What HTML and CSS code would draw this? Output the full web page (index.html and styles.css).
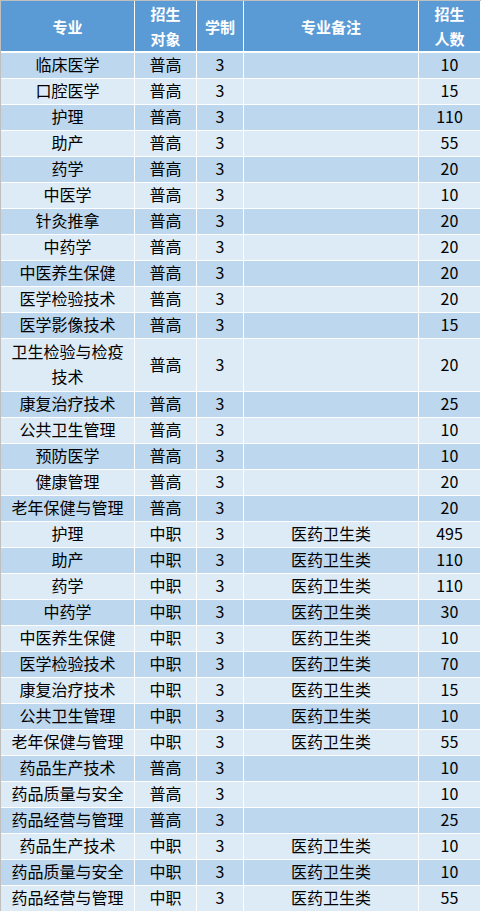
FILE: index.html
```html
<!DOCTYPE html>
<html lang="zh">
<head>
<meta charset="utf-8">
<title>招生计划</title>
<link rel="stylesheet" href="styles.css">
</head>
<body>
<table class="plan">
  <colgroup>
    <col class="c-major">
    <col class="c-target">
    <col class="c-years">
    <col class="c-note">
    <col class="c-count">
  </colgroup>
  <thead>
    <tr>
      <th>专业</th>
      <th>招生<br>对象</th>
      <th>学制</th>
      <th>专业备注</th>
      <th>招生<br>人数</th>
    </tr>
  </thead>
  <tbody>
    <tr><td>临床医学</td><td>普高</td><td>3</td><td></td><td>10</td></tr>
    <tr><td>口腔医学</td><td>普高</td><td>3</td><td></td><td>15</td></tr>
    <tr><td>护理</td><td>普高</td><td>3</td><td></td><td>110</td></tr>
    <tr><td>助产</td><td>普高</td><td>3</td><td></td><td>55</td></tr>
    <tr><td>药学</td><td>普高</td><td>3</td><td></td><td>20</td></tr>
    <tr><td>中医学</td><td>普高</td><td>3</td><td></td><td>10</td></tr>
    <tr><td>针灸推拿</td><td>普高</td><td>3</td><td></td><td>20</td></tr>
    <tr><td>中药学</td><td>普高</td><td>3</td><td></td><td>20</td></tr>
    <tr><td>中医养生保健</td><td>普高</td><td>3</td><td></td><td>20</td></tr>
    <tr><td>医学检验技术</td><td>普高</td><td>3</td><td></td><td>20</td></tr>
    <tr><td>医学影像技术</td><td>普高</td><td>3</td><td></td><td>15</td></tr>
    <tr class="tall"><td>卫生检验与检疫<br>技术</td><td>普高</td><td>3</td><td></td><td>20</td></tr>
    <tr><td>康复治疗技术</td><td>普高</td><td>3</td><td></td><td>25</td></tr>
    <tr><td>公共卫生管理</td><td>普高</td><td>3</td><td></td><td>10</td></tr>
    <tr><td>预防医学</td><td>普高</td><td>3</td><td></td><td>10</td></tr>
    <tr><td>健康管理</td><td>普高</td><td>3</td><td></td><td>20</td></tr>
    <tr><td>老年保健与管理</td><td>普高</td><td>3</td><td></td><td>20</td></tr>
    <tr><td>护理</td><td>中职</td><td>3</td><td>医药卫生类</td><td>495</td></tr>
    <tr><td>助产</td><td>中职</td><td>3</td><td>医药卫生类</td><td>110</td></tr>
    <tr><td>药学</td><td>中职</td><td>3</td><td>医药卫生类</td><td>110</td></tr>
    <tr><td>中药学</td><td>中职</td><td>3</td><td>医药卫生类</td><td>30</td></tr>
    <tr><td>中医养生保健</td><td>中职</td><td>3</td><td>医药卫生类</td><td>10</td></tr>
    <tr><td>医学检验技术</td><td>中职</td><td>3</td><td>医药卫生类</td><td>70</td></tr>
    <tr><td>康复治疗技术</td><td>中职</td><td>3</td><td>医药卫生类</td><td>15</td></tr>
    <tr><td>公共卫生管理</td><td>中职</td><td>3</td><td>医药卫生类</td><td>10</td></tr>
    <tr><td>老年保健与管理</td><td>中职</td><td>3</td><td>医药卫生类</td><td>55</td></tr>
    <tr><td>药品生产技术</td><td>普高</td><td>3</td><td></td><td>10</td></tr>
    <tr><td>药品质量与安全</td><td>普高</td><td>3</td><td></td><td>10</td></tr>
    <tr><td>药品经营与管理</td><td>普高</td><td>3</td><td></td><td>25</td></tr>
    <tr><td>药品生产技术</td><td>中职</td><td>3</td><td>医药卫生类</td><td>10</td></tr>
    <tr><td>药品质量与安全</td><td>中职</td><td>3</td><td>医药卫生类</td><td>10</td></tr>
    <tr><td>药品经营与管理</td><td>中职</td><td>3</td><td>医药卫生类</td><td>55</td></tr>
  </tbody>
</table>
</body>
</html>
```

FILE: styles.css
```css
html, body {
  margin: 0;
  padding: 0;
  background: #ffffff;
}

body {
  overflow: hidden;
  font-family: "Noto Sans CJK SC", "Noto Sans", sans-serif;
}

.plan {
  table-layout: fixed;
  width: 481px;
  border-collapse: separate;
  border-spacing: 0;
  border-top: 1px solid #bfbfbf;
  border-left: 1px solid #bfbfbf;
}

.c-major { width: 134px; }
.c-target { width: 62px; }
.c-years { width: 47px; }
.c-note { width: 175px; }
.c-count { width: 62px; }

.plan th,
.plan td {
  box-sizing: border-box;
  padding: 0 5px;
  text-align: center;
  vertical-align: middle;
  border-right: 1px solid #ffffff;
  border-bottom: 1px solid #ffffff;
  white-space: nowrap;
}

.plan th {
  height: 52px;
  background: #5b9bd5;
  color: #ffffff;
  font-size: 15px;
  font-weight: 700;
  line-height: 25px;
  border-bottom-width: 2px;
}

.plan td {
  height: 26px;
  padding-bottom: 2px;
  font-size: 16px;
  line-height: 23px;
  color: #000000;
}

.plan tbody tr:nth-child(odd) td {
  background: #bdd7ee;
}

.plan tbody tr:nth-child(even) td {
  background: #ddebf7;
}

.plan tr.tall td {
  height: 52px;
  line-height: 25px;
}
```
